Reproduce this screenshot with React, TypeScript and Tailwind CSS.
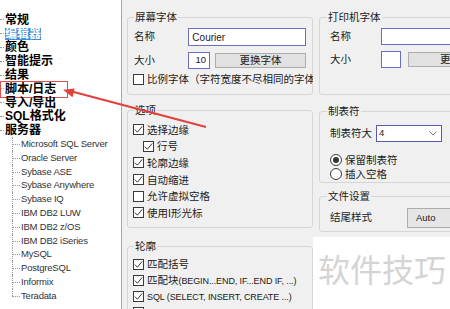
import React from "react";
import clsx from "clsx";

const topItems = ["常规", "编辑器", "颜色", "智能提示", "结果", "脚本/日志", "导入/导出", "SQL格式化", "服务器"];
const servers = [
  "Microsoft SQL Server",
  "Oracle Server",
  "Sybase ASE",
  "Sybase Anywhere",
  "Sybase IQ",
  "IBM DB2 LUW",
  "IBM DB2 z/OS",
  "IBM DB2 iSeries",
  "MySQL",
  "PostgreSQL",
  "Informix",
  "Teradata",
];

function Tree() {
  return (
    <div className="h-full w-[122px] shrink-0 border-r border-[#a8a8a8] bg-white pt-[13px]">
      {topItems.map((item) => (
        <div key={item} className="relative flex h-[13.8px] items-center">
          <span className="w-[4px] border-t border-dotted border-[#9a9a9a]" />
          <span
            className={clsx(
              "ml-[1px] text-[12px] font-bold leading-[12px] whitespace-nowrap",
              item === "编辑器" ? "bg-[#3c8ddd] text-white" : "text-black"
            )}
          >
            {item}
          </span>
          {item === "脚本/日志" && (
            <span className="absolute -top-[1px] -bottom-[2px] left-0 w-[68px] border border-[#e05050]" />
          )}
        </div>
      ))}
      {servers.map((s, i) => (
        <div key={s} className="flex h-[13.8px] items-center">
          <div className="relative ml-[12px] h-full w-[8px] shrink-0">
            <div
              className={clsx(
                "absolute left-0 top-0 border-l border-dotted border-[#9a9a9a]",
                i === servers.length - 1 ? "h-1/2" : "h-full"
              )}
            />
            <div className="absolute left-0 top-1/2 w-full border-t border-dotted border-[#9a9a9a]" />
          </div>
          <span className="ml-[1px] whitespace-nowrap text-[9.5px] leading-[12px] tracking-[-0.2px] text-[#333]">
            {s}
          </span>
        </div>
      ))}
    </div>
  );
}

function Box({ checked }: { checked: boolean }) {
  return (
    <span className="flex h-[11px] w-[11px] shrink-0 items-center justify-center border border-[#3a3a3a] bg-white">
      {checked && (
        <svg width="9" height="9" viewBox="0 0 9 9">
          <path d="M0.8 4.6 L3.4 7.2 L8.2 1.4" fill="none" stroke="#333" strokeWidth="1" />
        </svg>
      )}
    </span>
  );
}

function Check({
  checked,
  children,
  className,
}: {
  checked: boolean;
  children: React.ReactNode;
  className?: string;
}) {
  return (
    <div className={clsx("flex h-[16.6px] items-center gap-[3px] whitespace-nowrap text-[10.5px] leading-[14px]", className)}>
      <Box checked={checked} />
      <span>{children}</span>
    </div>
  );
}

function Radio({ checked, label }: { checked: boolean; label: string }) {
  return (
    <div className="flex h-[14px] items-center gap-[3px] whitespace-nowrap text-[10.5px] leading-[14px]">
      <span className="flex h-[12px] w-[12px] items-center justify-center rounded-full border border-[#3a3a3a] bg-white">
        {checked && <span className="h-[6px] w-[6px] rounded-full bg-[#333]" />}
      </span>
      <span>{label}</span>
    </div>
  );
}

function Group({
  title,
  className,
  children,
}: {
  title: string;
  className?: string;
  children: React.ReactNode;
}) {
  return (
    <fieldset className={clsx("min-w-0 rounded-[3px] border border-[#d6d6d6] px-[6px]", className)}>
      <legend className="px-[1px] text-[10.5px] leading-[14px]">{title}</legend>
      {children}
    </fieldset>
  );
}

const inputCls = "border border-[#6d6dbf] bg-white";
const buttonCls = "flex items-center justify-center border border-[#adadad] bg-[#e1e1e1] text-[10.5px]";

function MiddleColumn() {
  return (
    <div className="w-[186px] shrink-0">
      <Group title="屏幕字体" className="h-[85px]">
        <div className="mt-[4px] flex h-[18px] items-center">
          <span className="w-[55px] text-[10.5px]">名称</span>
          <div className={clsx(inputCls, "flex h-[18px] w-[119px] items-center pl-[3px] text-[10px]")}>Courier</div>
        </div>
        <div className="mt-[6px] flex h-[17px] items-center">
          <span className="w-[55px] text-[10.5px]">大小</span>
          <div className={clsx(inputCls, "flex h-[17px] w-[22px] items-center justify-end pr-[3px] text-[9.5px]")}>10</div>
          <div className={clsx(buttonCls, "ml-[5px] h-[15px] w-[92px]")}>更换字体</div>
        </div>
        <Check checked={false} className="-ml-[1px] mt-[2px] w-[180px] overflow-hidden">
          比例字体（字符宽度不尽相同的字体）
        </Check>
      </Group>

      <Group title="选项" className="mt-[8px] h-[125px]">
        <div className="mt-[4.5px]">
          <Check checked className="-ml-[1px]">选择边缘</Check>
          <Check checked className="ml-[9px]">行号</Check>
          <Check checked className="-ml-[1px]">轮廓边缘</Check>
          <Check checked className="-ml-[1px]">自动缩进</Check>
          <Check checked={false} className="-ml-[1px]">允许虚拟空格</Check>
          <Check checked className="-ml-[1px]">使用I形光标</Check>
        </div>
      </Group>

      <Group title="轮廓" className="mt-[11px] h-[90px]">
        <div className="mt-[3px]">
          <Check checked className="-ml-[1px] h-[16px]">匹配括号</Check>
          <Check checked className="-ml-[1px] h-[16px]">
            匹配块<span className="text-[9px] tracking-[-0.1px]">(BEGIN...END, IF...END IF, ...)</span>
          </Check>
          <Check checked className="-ml-[1px] h-[16px]">
            <span className="text-[9px] tracking-[-0.1px]">SQL (SELECT, INSERT, CREATE ...)</span>
          </Check>
          <Check checked className="-ml-[1px] h-[16px]">{""}</Check>
        </div>
      </Group>
    </div>
  );
}

function RightColumn() {
  return (
    <div className="flex w-[137px] shrink-0 flex-col">
      <Group title="打印机字体" className="ml-[6px] h-[85px] w-[170px] shrink-0 px-[7px]">
        <div className="ml-[3px] mt-[4px] flex h-[17px] items-center">
          <span className="w-[51px] shrink-0 text-[10.5px]">名称</span>
          <div className={clsx(inputCls, "h-[17px] w-[110px] shrink-0")} />
        </div>
        <div className="ml-[3px] mt-[6px] flex h-[17px] items-center">
          <span className="w-[51px] shrink-0 text-[10.5px]">大小</span>
          <div className={clsx(inputCls, "h-[17px] w-[20px] shrink-0")} />
          <div className={clsx(buttonCls, "ml-[7px] h-[15px] w-[106px] shrink-0")}>更换字体</div>
        </div>
      </Group>

      <Group title="制表符" className="ml-[6px] mt-[9px] h-[79px] w-[170px] shrink-0 px-[7px]">
        <div className="ml-[3px] mt-[7px] flex h-[17px] items-center">
          <span className="w-[46px] shrink-0 text-[10.5px]">制表符大</span>
          <div className="flex h-[17px] w-[66px] shrink-0 items-center justify-between border border-[#5858b8] bg-white pl-[2px] pr-[4px] text-[9.5px]">
            <span>4</span>
            <svg width="8" height="5" viewBox="0 0 8 5">
              <path d="M0.5 0.5 L4 4 L7.5 0.5" fill="none" stroke="#777" strokeWidth="1" />
            </svg>
          </div>
        </div>
        <div className="ml-[3px] mt-[11px]">
          <Radio checked label="保留制表符" />
          <Radio checked={false} label="插入空格" />
        </div>
      </Group>

      <Group title="文件设置" className="ml-[6px] mt-[6px] h-[43px] w-[170px] shrink-0 px-[7px]">
        <div className="ml-[3px] mt-[5px] flex h-[20px] items-center">
          <span className="w-[77px] shrink-0 text-[10.5px]">结尾样式</span>
          <div className="flex h-[20px] w-[80px] shrink-0 items-center border border-[#acacac] bg-[#e5e5e5] pl-[8px] text-[9.5px]">
            Auto
          </div>
        </div>
      </Group>

      <div className="mt-[5px] flex-1 bg-white pl-[5px] pt-[12px]">
        <span className="whitespace-nowrap text-[32px] leading-[44px] text-[#d4d4d4]">软件技巧</span>
      </div>
    </div>
  );
}

function Arrow() {
  return (
    <svg className="pointer-events-none absolute left-0 top-0" width="450" height="309">
      <line x1="206" y1="127" x2="70" y2="91" stroke="#e4403a" strokeWidth="2" />
      <polygon points="63,89.8 72.5,97.2 74.7,88.4" fill="#e4403a" />
    </svg>
  );
}

export default function App() {
  return (
    <div className="relative flex h-[309px] w-[450px] overflow-hidden bg-[#f0f0f0] font-['Liberation_Sans','Noto_Sans_CJK_SC',sans-serif] text-[#1a1a1a]">
      <Tree />
      <div className="flex pl-[5px] pt-[10px]">
        <MiddleColumn />
        <RightColumn />
      </div>
      <Arrow />
    </div>
  );
}
